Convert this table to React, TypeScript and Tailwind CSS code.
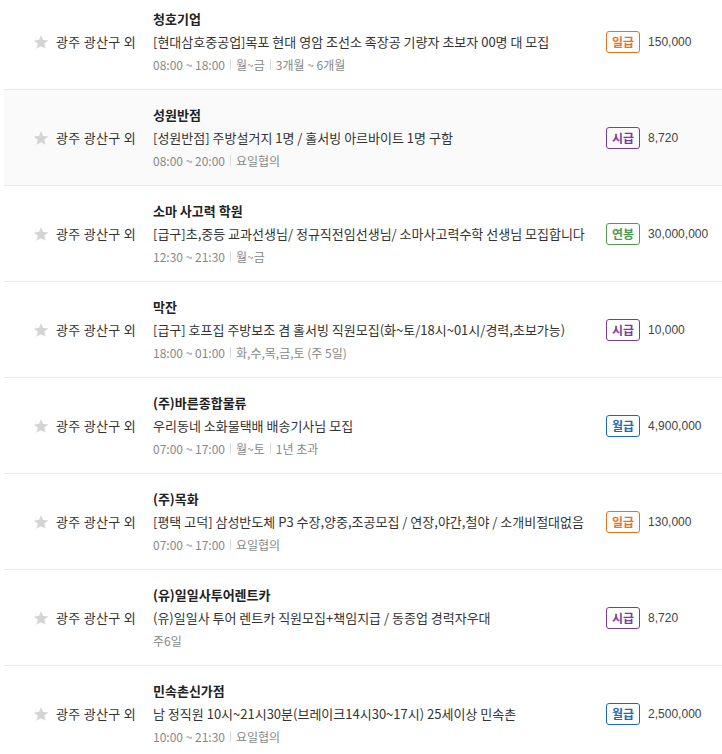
type Pay = '일급' | '시급' | '연봉' | '월급';

type Job = {
  company: string;
  title: string;
  meta: string[];
  pay: Pay;
  amount: string;
};

const jobs: Job[] = [
  {
    company: '청호기업',
    title: '[현대삼호중공업]목포 현대 영암 조선소 족장공 기량자 초보자 00명 대 모집',
    meta: ['08:00 ~ 18:00', '월~금', '3개월 ~ 6개월'],
    pay: '일급',
    amount: '150,000',
  },
  {
    company: '성원반점',
    title: '[성원반점] 주방설거지 1명 / 홀서빙 아르바이트 1명 구함',
    meta: ['08:00 ~ 20:00', '요일협의'],
    pay: '시급',
    amount: '8,720',
  },
  {
    company: '소마 사고력 학원',
    title: '[급구]초,중등 교과선생님/ 정규직전임선생님/ 소마사고력수학 선생님 모집합니다',
    meta: ['12:30 ~ 21:30', '월~금'],
    pay: '연봉',
    amount: '30,000,000',
  },
  {
    company: '막잔',
    title: '[급구] 호프집 주방보조 겸 홀서빙 직원모집(화~토/18시~01시/경력,초보가능)',
    meta: ['18:00 ~ 01:00', '화,수,목,금,토 (주 5일)'],
    pay: '시급',
    amount: '10,000',
  },
  {
    company: '(주)바른종합물류',
    title: '우리동네 소화물택배 배송기사님 모집',
    meta: ['07:00 ~ 17:00', '월~토', '1년 초과'],
    pay: '월급',
    amount: '4,900,000',
  },
  {
    company: '(주)목화',
    title: '[평택 고덕] 삼성반도체 P3 수장,양중,조공모집 / 연장,야간,철야 / 소개비절대없음',
    meta: ['07:00 ~ 17:00', '요일협의'],
    pay: '일급',
    amount: '130,000',
  },
  {
    company: '(유)일일사투어렌트카',
    title: '(유)일일사 투어 렌트카 직원모집+책임지급 / 동종업 경력자우대',
    meta: ['주6일'],
    pay: '시급',
    amount: '8,720',
  },
  {
    company: '민속촌신가점',
    title: '남 정직원 10시~21시30분(브레이크14시30~17시) 25세이상 민속촌',
    meta: ['10:00 ~ 21:30', '요일협의'],
    pay: '월급',
    amount: '2,500,000',
  },
];

const payStyle: Record<Pay, string> = {
  일급: 'border-[#e8731f] text-[#e8731f]',
  시급: 'border-[#7a3c9e] text-[#7a3c9e]',
  연봉: 'border-[#4f9a55] text-[#4f9a55]',
  월급: 'border-[#1a6bb5] text-[#1a6bb5]',
};

const Star = () => (
  <svg width="16" height="16" viewBox="0 0 24 24" className="shrink-0">
    <path
      d="M12 1.8l3.1 7.1 7.7.7-5.8 5.1 1.7 7.5L12 18.3l-6.7 3.9 1.7-7.5-5.8-5.1 7.7-.7z"
      fill="#d4d4d4"
    />
  </svg>
);

const JobRow = ({ job, shaded }: { job: Job; shaded: boolean }) => {
  return (
    <div
      className={`flex items-center h-[96px] border-b border-[#e9e9e9] ${shaded ? 'bg-[#fafafa]' : 'bg-white'}`}
    >
      <div className="w-[149px] shrink-0 flex items-center pl-[29px] gap-[7px]">
        <Star />
        <span className="text-[13px] text-[#333] tracking-[0.3px]">광주 광산구 외</span>
      </div>
      <div className="flex-1 min-w-0 flex flex-col">
        <div className="text-[13px] leading-[23px] font-bold text-[#222]">{job.company}</div>
        <div className="text-[13px] leading-[23px] text-[#333] whitespace-nowrap">{job.title}</div>
        <div className="flex items-center text-[12px] leading-[23px] text-[#888]">
          {job.meta.map((m, i) => (
            <span key={i} className="flex items-center">
              {i > 0 && <span className="inline-block w-px h-[11px] bg-[#dcdcdc] mx-[5px]" />}
              {m}
            </span>
          ))}
        </div>
      </div>
      <div className="w-[116px] shrink-0 flex items-center gap-[8px]">
        <span
          className={`h-[22px] px-[5px] flex items-center border rounded-[3px] text-[12px] font-bold ${payStyle[job.pay]}`}
        >
          {job.pay}
        </span>
        <span className="text-[12px] text-[#444] font-['Liberation_Sans',sans-serif]">
          {job.amount}
        </span>
      </div>
    </div>
  );
};

export default function App() {
  return (
    <div
      className="w-[722px] h-[754px] overflow-hidden bg-white"
      style={{ fontFamily: '"Noto Sans CJK KR", "Noto Sans", sans-serif' }}
    >
      <div className="ml-[4px] -mt-[6px]">
        {jobs.map((job, i) => (
          <JobRow key={i} job={job} shaded={i === 1} />
        ))}
      </div>
    </div>
  );
}
